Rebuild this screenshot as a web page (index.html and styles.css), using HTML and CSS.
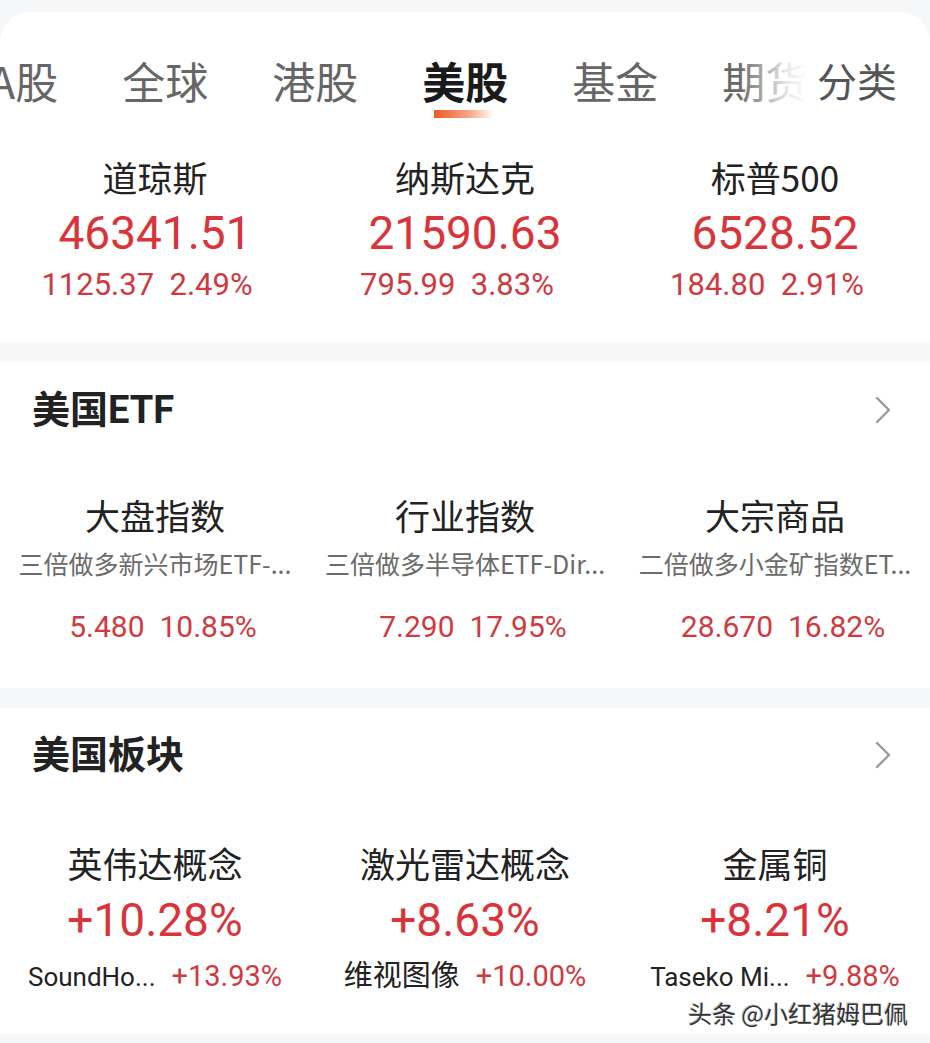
FILE: index.html
```html
<!DOCTYPE html>
<html lang="zh-CN">
<head>
    <meta charset="UTF-8">
    <meta name="viewport" content="width=device-width, initial-scale=1.0">
    <title>美股行情</title>
    <link rel="stylesheet" href="styles.css">
</head>
<body>

<div class="card top-card">
    <div class="tabs">
        <div class="tab-scroll">
            <span class="tab">A股</span>
            <span class="tab">全球</span>
            <span class="tab">港股</span>
            <span class="tab active">美股<i class="bar"></i></span>
            <span class="tab">基金</span>
            <span class="tab">期货</span>
        </div>
        <div class="tab-more">分类</div>
    </div>

    <div class="grid index-grid">
        <div class="cell">
            <div class="name">道琼斯</div>
            <div class="price">46341.51</div>
            <div class="change">1125.37&nbsp; 2.49%</div>
        </div>
        <div class="cell">
            <div class="name">纳斯达克</div>
            <div class="price">21590.63</div>
            <div class="change">795.99&nbsp; 3.83%</div>
        </div>
        <div class="cell">
            <div class="name">标普500</div>
            <div class="price">6528.52</div>
            <div class="change">184.80&nbsp; 2.91%</div>
        </div>
    </div>
</div>

<div class="card etf-card">
    <div class="section-head">
        <h2>美国ETF</h2>
        <svg class="chevron" width="18" height="30" viewBox="0 0 18 30"><path d="M3 3 L15 15 L3 27" fill="none" stroke="#9a9a9a" stroke-width="2.4" stroke-linecap="round" stroke-linejoin="round"/></svg>
    </div>
    <div class="grid etf-grid">
        <div class="cell">
            <div class="name">大盘指数</div>
            <div class="desc">三倍做多新兴市场ETF-...</div>
            <div class="quote">5.480&nbsp; 10.85%</div>
        </div>
        <div class="cell">
            <div class="name">行业指数</div>
            <div class="desc">三倍做多半导体ETF-Dir...</div>
            <div class="quote">7.290&nbsp; 17.95%</div>
        </div>
        <div class="cell">
            <div class="name">大宗商品</div>
            <div class="desc">二倍做多小金矿指数ET...</div>
            <div class="quote">28.670&nbsp; 16.82%</div>
        </div>
    </div>
</div>

<div class="card sector-card">
    <div class="section-head">
        <h2>美国板块</h2>
        <svg class="chevron" width="18" height="30" viewBox="0 0 18 30"><path d="M3 3 L15 15 L3 27" fill="none" stroke="#9a9a9a" stroke-width="2.4" stroke-linecap="round" stroke-linejoin="round"/></svg>
    </div>
    <div class="grid sector-grid">
        <div class="cell">
            <div class="name">英伟达概念</div>
            <div class="rate">+10.28%</div>
            <div class="leader"><span class="stock">SoundHo...</span><span class="up">+13.93%</span></div>
        </div>
        <div class="cell">
            <div class="name">激光雷达概念</div>
            <div class="rate">+8.63%</div>
            <div class="leader"><span class="stock cn">维视图像</span><span class="up">+10.00%</span></div>
        </div>
        <div class="cell">
            <div class="name">金属铜</div>
            <div class="rate">+8.21%</div>
            <div class="leader"><span class="stock">Taseko Mi...</span><span class="up">+9.88%</span></div>
        </div>
    </div>
    <div class="watermark">头条 @小红猪姆巴佩</div>
</div>

</body>
</html>
```

FILE: styles.css
```css
body {
    margin: 0;
    padding: 12px 0 10px;
    background: #f6f7f9;
    font-family: Roboto, "Noto Sans CJK SC", sans-serif;
    color: #222;
    overflow: hidden;
}
.card {
    background: #fff;
    margin-bottom: 20px;
    position: relative;
}
.top-card {
    border-radius: 30px 30px 0 0;
    padding: 40px 0 39px;
}
.tabs {
    position: relative;
    height: 66px;
}
.tab-scroll {
    display: flex;
    gap: 64px;
    margin-left: -11px;
    white-space: nowrap;
}
.tab {
    position: relative;
    font-family: "Noto Sans CJK SC", sans-serif;
    font-size: 43px;
    line-height: 56px;
    color: #666;
}
.tab.active {
    color: #1a1a1a;
    font-weight: 700;
}
.tab .bar {
    position: absolute;
    left: 12px;
    top: 58px;
    width: 60px;
    height: 8px;
    background: linear-gradient(to right, #ee5a22, #f7a98a 60%, rgba(255, 255, 255, 0));
}
.tab-more {
    position: absolute;
    top: 0;
    right: 0;
    height: 56px;
    padding: 0 33px 0 80px;
    font-family: "Noto Sans CJK SC", sans-serif;
    font-size: 40px;
    line-height: 56px;
    color: #555;
    background: linear-gradient(to right, rgba(255, 255, 255, 0), rgba(255, 255, 255, 0.85) 50px, #fff 72px);
}
.grid {
    display: grid;
    grid-template-columns: repeat(3, 1fr);
}
.cell {
    text-align: center;
    min-width: 0;
}
.name {
    font-family: "Noto Sans CJK SC", sans-serif;
    color: #222;
}
.index-grid {
    margin-top: 37px;
}
.index-grid .name {
    font-size: 35px;
    line-height: 44px;
}
.price {
    margin-top: 6px;
    font-size: 46px;
    line-height: 56px;
    color: #d9343a;
}
.change {
    margin-top: 6px;
    padding-right: 16px;
    font-size: 31px;
    line-height: 36px;
    color: #cf3a3f;
}

.section-head {
    display: flex;
    align-items: center;
    justify-content: space-between;
    padding: 0 38px 0 32px;
}
.section-head h2 {
    margin: 0;
    font-family: Roboto, "Noto Sans CJK SC", sans-serif;
    font-size: 38px;
    line-height: 48px;
    font-weight: 700;
    color: #222;
}
.etf-card {
    padding: 24px 0 42px;
}
.etf-grid {
    margin-top: 57px;
}
.etf-grid .name {
    font-size: 35px;
    line-height: 48px;
}
.desc {
    margin-top: 8px;
    font-family: "Noto Sans CJK SC", sans-serif;
    font-size: 25px;
    line-height: 32px;
    color: #6b6b6b;
    white-space: nowrap;
}
.quote {
    margin-top: 29px;
    padding-left: 16px;
    font-size: 30px;
    line-height: 38px;
    color: #cf3a3f;
}

.sector-card {
    padding: 23px 0 38px;
    margin-bottom: 0;
}
.sector-grid {
    margin-top: 61px;
}
.sector-grid .name {
    font-size: 35px;
    line-height: 46px;
}
.rate {
    margin-top: 6px;
    font-size: 46px;
    line-height: 56px;
    color: #d9343a;
}
.leader {
    margin-top: 9px;
    display: flex;
    justify-content: center;
    align-items: baseline;
    gap: 16px;
    font-size: 29px;
    line-height: 38px;
    white-space: nowrap;
}
.stock {
    font-size: 26px;
    color: #222;
}
.stock.cn {
    font-size: 29px;
}
.up {
    color: #cf3a3f;
}
.watermark {
    position: absolute;
    right: 22px;
    bottom: 6px;
    font-family: "Noto Sans CJK SC", sans-serif;
    font-size: 24px;
    line-height: 30px;
    color: #333;
    text-shadow: 1px 1px 0 #fff, -1px -1px 0 #ccc;
}
```
